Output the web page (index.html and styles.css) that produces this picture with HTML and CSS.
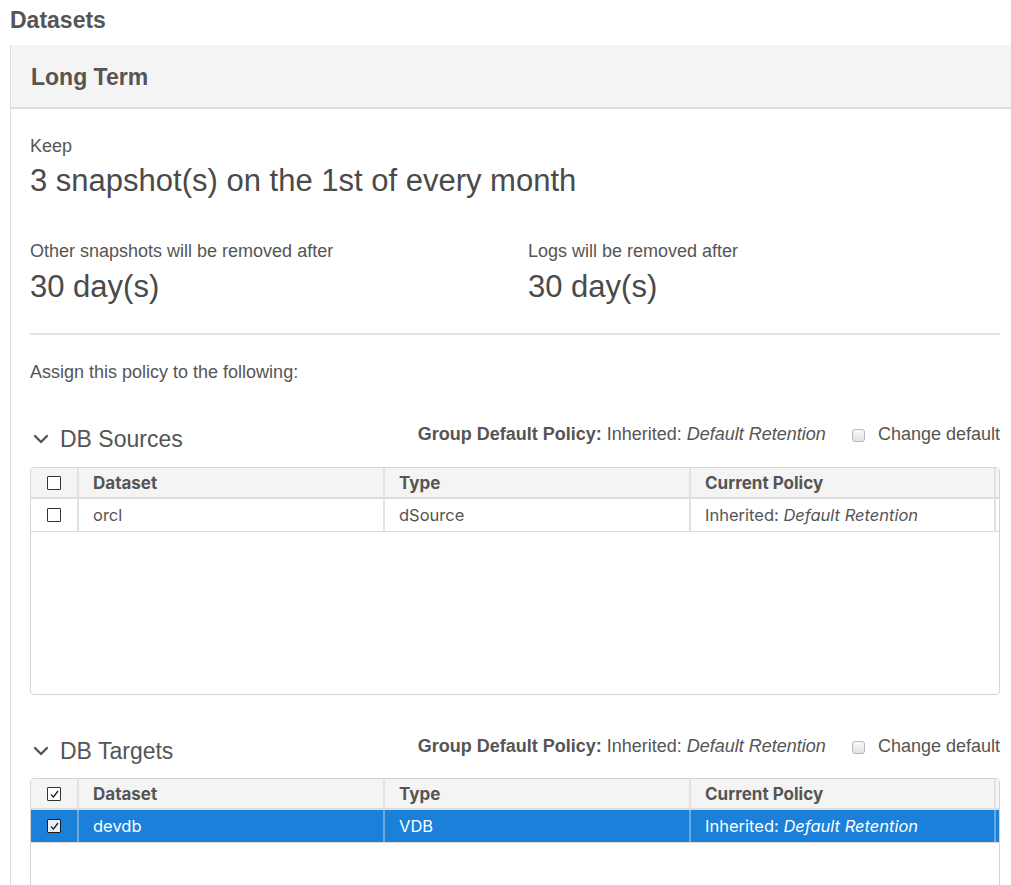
FILE: index.html
```html
<!DOCTYPE html>
<html>
<head>
<meta charset="utf-8">
<link rel="stylesheet" href="styles.css">
</head>
<body>
<h1 class="page-title">Datasets</h1>
<div class="panel">
  <div class="panel-head">Long Term</div>
  <div class="panel-body">
    <div class="label">Keep</div>
    <div class="big">3 snapshot(s) on the 1st of every month</div>
    <div class="two-col">
      <div class="col">
        <div class="label">Other snapshots will be removed after</div>
        <div class="big">30 day(s)</div>
      </div>
      <div class="col">
        <div class="label">Logs will be removed after</div>
        <div class="big">30 day(s)</div>
      </div>
    </div>
    <hr class="divider">
    <div class="assign">Assign this policy to the following:</div>

    <div class="section-head">
      <div class="section-title">
        <svg class="chev" width="16" height="10" viewBox="0 0 16 10"><path d="M2 2 L8 8 L14 2" fill="none" stroke="#555" stroke-width="2.4" stroke-linecap="round" stroke-linejoin="round"/></svg>
        <span>DB Sources</span>
      </div>
      <div class="group-policy">
        <span><b>Group Default Policy:</b> Inherited: <i>Default Retention</i></span>
        <label class="change"><span class="mini-cb"></span>Change default</label>
      </div>
    </div>
    <div class="grid-box">
      <div class="row head">
        <div class="cell cb"><span class="box"></span></div>
        <div class="cell">Dataset</div>
        <div class="cell">Type</div>
        <div class="cell">Current Policy</div>
      </div>
      <div class="row">
        <div class="cell cb"><span class="box"></span></div>
        <div class="cell">orcl</div>
        <div class="cell">dSource</div>
        <div class="cell"><span>Inherited: <i>Default Retention</i></span></div>
      </div>
    </div>

    <div class="section-head second">
      <div class="section-title">
        <svg class="chev" width="16" height="10" viewBox="0 0 16 10"><path d="M2 2 L8 8 L14 2" fill="none" stroke="#555" stroke-width="2.4" stroke-linecap="round" stroke-linejoin="round"/></svg>
        <span>DB Targets</span>
      </div>
      <div class="group-policy">
        <span><b>Group Default Policy:</b> Inherited: <i>Default Retention</i></span>
        <label class="change"><span class="mini-cb"></span>Change default</label>
      </div>
    </div>
    <div class="grid-box">
      <div class="row head">
        <div class="cell cb"><span class="box"><svg width="9" height="8" viewBox="0 0 9 8"><path d="M1 4.5 L3.5 7 L8 1" fill="none" stroke="#222" stroke-width="1.3"/></svg></span></div>
        <div class="cell">Dataset</div>
        <div class="cell">Type</div>
        <div class="cell">Current Policy</div>
      </div>
      <div class="row selected">
        <div class="cell cb"><span class="box sel"><svg width="9" height="8" viewBox="0 0 9 8"><path d="M1 4.5 L3.5 7 L8 1" fill="none" stroke="#222" stroke-width="1.3"/></svg></span></div>
        <div class="cell">devdb</div>
        <div class="cell">VDB</div>
        <div class="cell"><span>Inherited: <i>Default Retention</i></span></div>
      </div>
    </div>
  </div>
</div>
</body>
</html>
```

FILE: styles.css
```css
html, body {
  margin: 0;
  padding: 0;
  background: #fff;
  font-family: "Liberation Sans", Arial, sans-serif;
  color: #555;
  overflow: hidden;
}
.page-title {
  margin: 0;
  padding: 7px 0 0 10px;
  height: 45px;
  box-sizing: border-box;
  font-size: 23px;
  font-weight: bold;
  color: #555;
  line-height: 26px;
}
.panel {
  margin-left: 10px;
  border-left: 1px solid #ddd;
  width: 1020px;
}
.panel-head {
  background: #f4f4f4;
  height: 62px;
  border-bottom: 2px solid #dcdcdc;
  padding-left: 20px;
  font-size: 23px;
  font-weight: bold;
  line-height: 64px;
  color: #555;
}
.panel-body {
  padding: 26px 0 0 19px;
  width: 970px;
}
.label {
  font-size: 18px;
  line-height: 22px;
}
.big {
  font-size: 31px;
  line-height: 36px;
  margin-top: 6px;
  color: #4a4a4a;
}
.two-col {
  display: flex;
  margin-top: 41px;
}
.col .big {
  margin-top: 7px;
}
.col {
  flex: 0 0 498px;
}
.col + .col {
  flex: 1 1 auto;
}
.divider {
  border: 0;
  border-top: 2px solid #e2e2e2;
  margin: 28px 0 0 0;
}
.assign {
  margin-top: 26px;
  font-size: 18px;
  line-height: 22px;
}
.section-head {
  display: flex;
  align-items: flex-start;
  justify-content: space-between;
  margin-top: 39px;
  height: 34px;
}
.section-head.second {
  margin-top: 39px;
}
.section-title {
  display: flex;
  align-items: center;
  font-size: 23px;
  line-height: 34px;
  color: #555;
}
.chev {
  margin: 0 11px 0 3px;
}
.group-policy {
  display: flex;
  align-items: center;
  font-size: 18px;
  line-height: 22px;
  margin-top: 1px;
  color: #555;
}
.change {
  display: flex;
  align-items: center;
  margin-left: 26px;
}
.mini-cb {
  display: inline-block;
  width: 11px;
  height: 11px;
  border: 1px solid #b8b8b8;
  border-radius: 3px;
  background: linear-gradient(#fafafa, #e0e0e0);
  margin-right: 13px;
  margin-top: 3px;
}
.grid-box {
  margin-top: 11px;
  height: 228px;
  border: 1px solid #d4d4d4;
  border-radius: 4px;
  box-sizing: border-box;
  overflow: hidden;
  font-family: Inter, "Liberation Sans", sans-serif;
  font-size: 16.5px;
}
.second + .grid-box {
  margin-top: 10px;
}
.row {
  display: grid;
  grid-template-columns: 48px 306px 306px 305px;
  height: 32px;
  border-bottom: 1px solid #dcdcdc;
}
.row.head {
  background: #f4f4f4;
  font-weight: 700;
  font-size: 17px;
  height: 29px;
  border-bottom: 2px solid #dcdcdc;
}
.cell {
  display: flex;
  align-items: center;
  padding-left: 14px;
  border-right: 2px solid #e2e2e2;
  white-space: nowrap;
}
.cell.cb {
  padding-left: 0;
  justify-content: center;
}
.box {
  display: inline-flex;
  align-items: center;
  justify-content: center;
  width: 12px;
  height: 12px;
  border: 1px solid #333;
  border-radius: 1px;
  background: #fff;
}
.row.selected {
  background: #1a80d9;
  color: #fff;
}
.row.selected .cell {
  border-right-color: #6aa9e4;
}
.box.sel {
  background: #e8f0fa;
  border-color: #1a1a1a;
}
```
